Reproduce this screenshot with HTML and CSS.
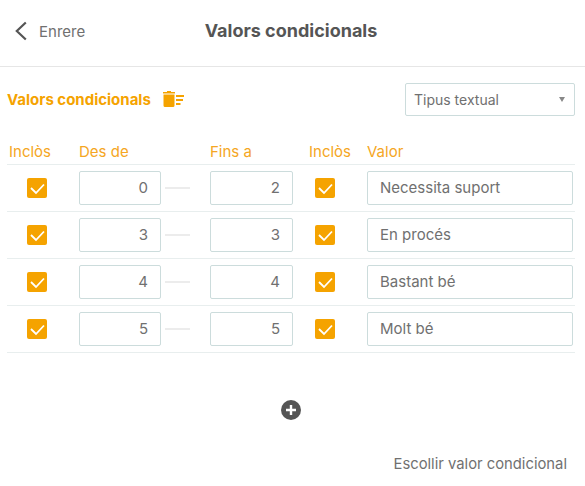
FILE: index.html
```html
<!DOCTYPE html>
<html lang="ca">
<head>
  <meta charset="UTF-8" />
  <title>Valors condicionals</title>
  <link rel="stylesheet" href="styles.css">
</head>
<body>
  <header class="top-bar">
    <div class="back">
      <svg class="back-icon" width="14" height="20" viewBox="0 0 14 20"><path d="M11.800 1.500 L2.800 10 L11.800 18.500" fill="none" stroke="#555" stroke-width="2.200"/></svg>
      <span>Enrere</span>
    </div>
    <h1>Valors condicionals</h1>
  </header>

  <div class="section-head">
    <div class="section-title">
      <h2>Valors condicionals</h2>
      <svg width="21" height="16" viewBox="0 0 21 16"><path fill="#f5a300" d="M4 0h4v1h4v1.500H0V1h4zM0.500 3.500h11v11a1.500 1.500 0 0 1-1.500 1.500H2A1.500 1.500 0 0 1 0.500 14.500z"/><path fill="#f5a300" d="M13 4h8v2h-8zM13 8h7v2h-7zM13 12h4.500v2H13z"/></svg>
    </div>
    <div class="select">
      <span>Tipus textual</span>
      <span class="caret"></span>
    </div>
  </div>

  <div class="table">
    <div class="row head">
      <span class="inc-head">Inclòs</span>
      <span>Des de</span>
      <span></span>
      <span>Fins a</span>
      <span class="inc-head">Inclòs</span>
      <span>Valor</span>
    </div>
    <div class="row">
      <div class="cell-check"><span class="check"><svg width="20" height="20" viewBox="0 0 20 20"><path d="M4 10l5 5 8-8.500" fill="none" stroke="#fff" stroke-width="1.800"/></svg></span></div>
      <div class="field num">0</div>
      <div class="dash"></div>
      <div class="field num">2</div>
      <div class="cell-check"><span class="check"><svg width="20" height="20" viewBox="0 0 20 20"><path d="M4 10l5 5 8-8.500" fill="none" stroke="#fff" stroke-width="1.800"/></svg></span></div>
      <div class="field">Necessita suport</div>
    </div>
    <div class="row">
      <div class="cell-check"><span class="check"><svg width="20" height="20" viewBox="0 0 20 20"><path d="M4 10l5 5 8-8.500" fill="none" stroke="#fff" stroke-width="1.800"/></svg></span></div>
      <div class="field num">3</div>
      <div class="dash"></div>
      <div class="field num">3</div>
      <div class="cell-check"><span class="check"><svg width="20" height="20" viewBox="0 0 20 20"><path d="M4 10l5 5 8-8.500" fill="none" stroke="#fff" stroke-width="1.800"/></svg></span></div>
      <div class="field">En procés</div>
    </div>
    <div class="row">
      <div class="cell-check"><span class="check"><svg width="20" height="20" viewBox="0 0 20 20"><path d="M4 10l5 5 8-8.500" fill="none" stroke="#fff" stroke-width="1.800"/></svg></span></div>
      <div class="field num">4</div>
      <div class="dash"></div>
      <div class="field num">4</div>
      <div class="cell-check"><span class="check"><svg width="20" height="20" viewBox="0 0 20 20"><path d="M4 10l5 5 8-8.500" fill="none" stroke="#fff" stroke-width="1.800"/></svg></span></div>
      <div class="field">Bastant bé</div>
    </div>
    <div class="row">
      <div class="cell-check"><span class="check"><svg width="20" height="20" viewBox="0 0 20 20"><path d="M4 10l5 5 8-8.500" fill="none" stroke="#fff" stroke-width="1.800"/></svg></span></div>
      <div class="field num">5</div>
      <div class="dash"></div>
      <div class="field num">5</div>
      <div class="cell-check"><span class="check"><svg width="20" height="20" viewBox="0 0 20 20"><path d="M4 10l5 5 8-8.500" fill="none" stroke="#fff" stroke-width="1.800"/></svg></span></div>
      <div class="field">Molt bé</div>
    </div>
  </div>

  <div class="add">
    <svg width="20" height="20" viewBox="0 0 20 20"><circle cx="10" cy="10" r="10" fill="#555"/><path d="M10 5v10M5 10h10" stroke="#fff" stroke-width="2.400"/></svg>
  </div>

  <div class="footer">Escollir valor condicional</div>
</body>
</html>
```

FILE: styles.css
```css
html,
body {
  height: 100%;
}

body {
  margin: 0;
  background-color: #fff;
  color: #555;
  font-family: 'Inter', sans-serif;
  overflow: hidden;
}

.top-bar {
  position: relative;
  height: 66px;
  border-bottom: 1px solid #e6e6e6;
  display: flex;
  align-items: center;
  justify-content: center;
}

.top-bar h1 {
  margin: 0 0 5px -3px;
  font-size: 18px;
  font-weight: 700;
}

.back {
  position: absolute;
  left: 14px;
  top: 21px;
  display: flex;
  align-items: center;
  gap: 11px;
  font-size: 15px;
  color: #707070;
}

.back-icon {
  display: block;
}

.section-head {
  display: flex;
  justify-content: space-between;
  align-items: center;
  height: 32px;
  margin-top: 16px;
  padding: 0 10px 0 7px;
}

.section-title {
  display: flex;
  align-items: center;
  gap: 12px;
}

.section-title h2 {
  margin: 0;
  font-size: 15px;
  font-weight: 700;
  color: #f5a300;
}

.select {
  box-sizing: border-box;
  width: 170px;
  height: 33px;
  padding: 0 9px 0 8px;
  border: 1px solid #ccdcdc;
  border-radius: 2px;
  display: flex;
  align-items: center;
  justify-content: space-between;
  font-size: 14px;
  color: #707070;
}

.caret {
  width: 0;
  height: 0;
  border-left: 3.500px solid transparent;
  border-right: 3.500px solid transparent;
  border-top: 5px solid #888;
}

.table {
  margin: 19px 10px 0 7px;
}

.row {
  display: grid;
  grid-template-columns: 72px 82px 49px 83px 74px 206px;
  align-items: center;
  height: 46px;
  border-bottom: 1px solid #e8eeee;
}

.row.head {
  padding-top: 4px;
  box-sizing: border-box;
  height: 31px;
  font-size: 15px;
  color: #f5a623;
}

.inc-head {
  padding-left: 2px;
}

.row.head .inc-head:nth-child(5) {
  padding-left: 0;
  margin-left: 16px;
}

.cell-check {
  padding-left: 20px;
}

.row .cell-check:nth-child(5) {
  padding-left: 22px;
}

.check {
  display: block;
  width: 20px;
  height: 20px;
  border-radius: 2px;
  background-color: #f5a300;
}

.check svg {
  display: block;
}

.field {
  box-sizing: border-box;
  height: 34px;
  line-height: 32px;
  padding: 0 12px;
  border: 1px solid #ccdcdc;
  border-radius: 2px;
  font-size: 15px;
  color: #707070;
}

.num {
  text-align: right;
}

.dash {
  width: 25px;
  height: 1px;
  margin-left: 4px;
  border-top: 2px solid #ececec;
}

.add {
  display: flex;
  justify-content: center;
  margin: 47px 0 0 -3px;
}

.add svg {
  display: block;
}

.footer {
  margin-top: 35px;
  padding-right: 18px;
  text-align: right;
  font-size: 14.800px;
  color: #707070;
}
```
